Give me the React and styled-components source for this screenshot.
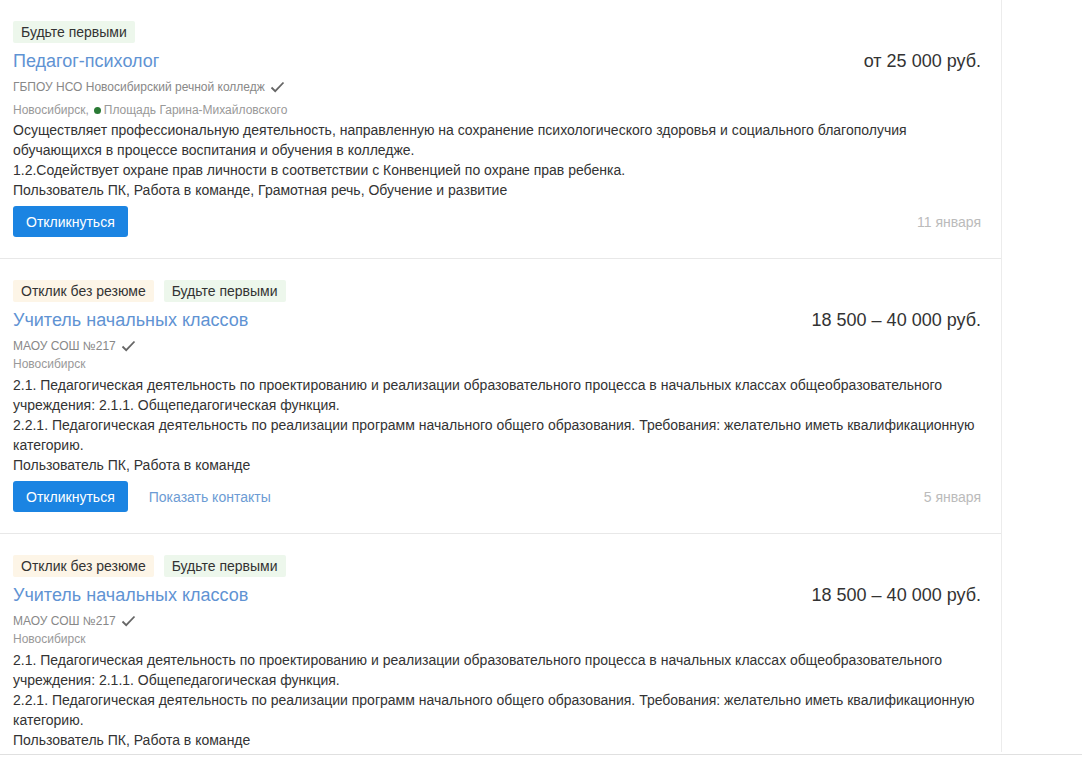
import React from "react";
import styled, { createGlobalStyle } from "styled-components";

const vacancies = [
  {
    id: 1,
    tags: [{ text: "Будьте первыми", kind: "green" }],
    title: "Педагог-психолог",
    salary: "от 25 000 руб.",
    company: "ГБПОУ НСО Новосибирский речной колледж",
    city: "Новосибирск",
    metro: "Площадь Гарина-Михайловского",
    text: [
      "Осуществляет профессиональную деятельность, направленную на сохранение психологического здоровья и социального благополучия обучающихся в процессе воспитания и обучения в колледже.",
      "1.2.Содействует охране прав личности в соответствии с Конвенцией по охране прав ребенка.",
      "Пользователь ПК, Работа в команде, Грамотная речь, Обучение и развитие",
    ],
    contacts: false,
    date: "11 января",
  },
  {
    id: 2,
    tags: [
      { text: "Отклик без резюме", kind: "orange" },
      { text: "Будьте первыми", kind: "green" },
    ],
    title: "Учитель начальных классов",
    salary: "18 500 – 40 000 руб.",
    company: "МАОУ СОШ №217",
    city: "Новосибирск",
    text: [
      "2.1. Педагогическая деятельность по проектированию и реализации образовательного процесса в начальных классах общеобразовательного учреждения: 2.1.1. Общепедагогическая функция.",
      "2.2.1. Педагогическая деятельность по реализации программ начального общего образования. Требования: желательно иметь квалификационную категорию.",
      "Пользователь ПК, Работа в команде",
    ],
    contacts: true,
    date: "5 января",
  },
  {
    id: 3,
    tags: [
      { text: "Отклик без резюме", kind: "orange" },
      { text: "Будьте первыми", kind: "green" },
    ],
    title: "Учитель начальных классов",
    salary: "18 500 – 40 000 руб.",
    company: "МАОУ СОШ №217",
    city: "Новосибирск",
    text: [
      "2.1. Педагогическая деятельность по проектированию и реализации образовательного процесса в начальных классах общеобразовательного учреждения: 2.1.1. Общепедагогическая функция.",
      "2.2.1. Педагогическая деятельность по реализации программ начального общего образования. Требования: желательно иметь квалификационную категорию.",
      "Пользователь ПК, Работа в команде",
    ],
    contacts: true,
    date: "3 января",
  },
];

const CheckIcon = () => (
  <svg width="15" height="12" viewBox="0 0 15 12" fill="none">
    <path d="M1.5 6.5 L5.2 10.2 L13.5 1.5" stroke="#666" strokeWidth="1.8" />
  </svg>
);

const VacancyCard = ({ vacancy }) => (
  <Card>
    <Tags>
      {vacancy.tags.map((tag) => (
        <Tag key={tag.text} kind={tag.kind}>
          {tag.text}
        </Tag>
      ))}
    </Tags>
    <Header>
      <Title href="#">{vacancy.title}</Title>
      <Salary>{vacancy.salary}</Salary>
    </Header>
    <Company>
      {vacancy.company}
      <CheckIcon />
    </Company>
    <Location metro={!!vacancy.metro}>
      {vacancy.city}
      {vacancy.metro && (
        <>
          ,<MetroDot />
          {vacancy.metro}
        </>
      )}
    </Location>
    <Description metro={!!vacancy.metro}>
      {vacancy.text.map((line, index) => (
        <div key={index}>{line}</div>
      ))}
    </Description>
    <Footer>
      <Actions>
        <RespondButton>Откликнуться</RespondButton>
        {vacancy.contacts && <ContactsLink>Показать контакты</ContactsLink>}
      </Actions>
      <DateText>{vacancy.date}</DateText>
    </Footer>
  </Card>
);

export default function App() {
  return (
    <>
      <GlobalStyle />
      <Page>
        <Results>
          {vacancies.map((vacancy) => (
            <VacancyCard key={vacancy.id} vacancy={vacancy} />
          ))}
        </Results>
      </Page>
      <BottomBar />
    </>
  );
}

const GlobalStyle = createGlobalStyle`
  body {
    margin: 0;
    background: #fff;
    font-family: "Liberation Sans", Arial, sans-serif;
    color: #333;
    overflow: hidden;
  }
`;

const Page = styled.div`
  display: flex;
  width: 1082px;
  height: 754px;
  overflow: hidden;
`;

const Results = styled.div`
  width: 1001px;
  flex-shrink: 0;
  border-right: 1px solid #ececec;
  height: 752px;
  overflow: hidden;
`;

const Card = styled.div`
  padding: 21px 20px 21px 13px;
  border-bottom: 1px solid #e8e8e8;
`;

const Tags = styled.div`
  display: flex;
  gap: 10px;
  margin-bottom: 5px;
`;

const Tag = styled.span`
  display: inline-block;
  height: 22px;
  line-height: 22px;
  padding: 0 8px;
  font-size: 14px;
  color: #333;
  border-radius: 2px;
  background: ${(props) => (props.kind === "orange" ? "#fdf5e7" : "#edf7ec")};
`;

const Header = styled.div`
  display: flex;
  justify-content: space-between;
  align-items: center;
  height: 26px;
`;

const Title = styled.a`
  font-size: 18px;
  line-height: 26px;
  color: #5f93d3;
  text-decoration: none;
`;

const Salary = styled.div`
  font-size: 18px;
  line-height: 26px;
  color: #333;
`;

const Company = styled.div`
  display: flex;
  align-items: center;
  gap: 5px;
  margin-top: 4px;
  font-size: 12px;
  line-height: 18px;
  color: #888;
`;

const Location = styled.div`
  display: flex;
  align-items: center;
  margin-top: ${(props) => (props.metro ? "5px" : "0")};
  font-size: 12px;
  line-height: 18px;
  color: #999;
`;

const MetroDot = styled.span`
  width: 7px;
  height: 7px;
  border-radius: 50%;
  background: #2a7a35;
  margin: 0 3px 0 5px;
`;

const Description = styled.div`
  margin-top: ${(props) => (props.metro ? "1px" : "2px")};
  font-size: 14px;
  line-height: 20px;
  color: #333;
`;

const Footer = styled.div`
  display: flex;
  justify-content: space-between;
  align-items: center;
  margin-top: 6px;
`;

const Actions = styled.div`
  display: flex;
  align-items: center;
  gap: 21px;
`;

const RespondButton = styled.button`
  height: 31px;
  padding: 0 13px;
  border: none;
  border-radius: 3px;
  background: #1b84e2;
  color: #fff;
  font-family: "Liberation Sans", Arial, sans-serif;
  font-size: 14px;
  cursor: pointer;
`;

const ContactsLink = styled.a`
  font-size: 14px;
  color: #6c9bd4;
  cursor: pointer;
`;

const DateText = styled.div`
  font-size: 14px;
  color: #bbb;
`;

const BottomBar = styled.div`
  position: fixed;
  left: 0;
  right: 0;
  bottom: 0;
  height: 7px;
  background: #fff;
  border-top: 1px solid #e0e0e0;
`;
